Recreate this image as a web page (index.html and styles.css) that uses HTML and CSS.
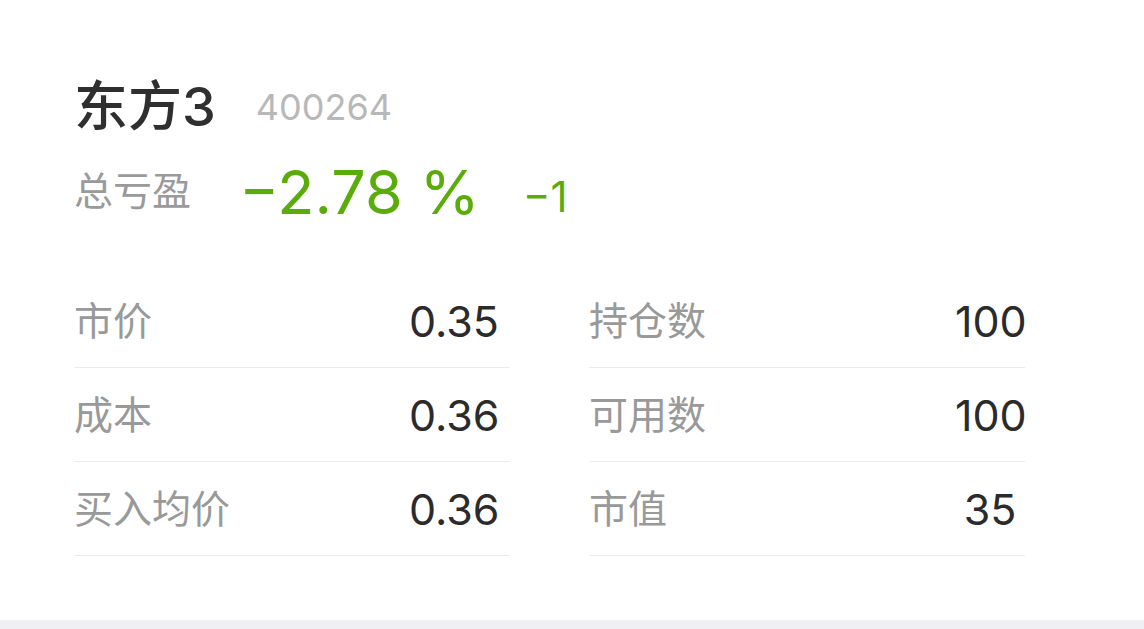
FILE: index.html
```html
<!DOCTYPE html>
<html lang="zh-CN">
<head>
<meta charset="utf-8">
<link rel="stylesheet" href="styles.css">
</head>
<body>
<div class="card">
  <div class="title-row">
    <span class="name">东方3</span>
    <span class="code">400264</span>
  </div>
  <div class="profit-row">
    <span class="profit-label">总亏盈</span>
    <span class="profit-pct">−2.78 %</span>
    <span class="profit-abs">−1</span>
  </div>
  <div class="table">
    <div class="col col-left">
      <div class="row"><span class="label">市价</span><span class="value">0.35</span></div>
      <div class="row"><span class="label">成本</span><span class="value">0.36</span></div>
      <div class="row"><span class="label">买入均价</span><span class="value">0.36</span></div>
    </div>
    <div class="col col-right">
      <div class="row"><span class="label">持仓数</span><span class="value">100</span></div>
      <div class="row"><span class="label">可用数</span><span class="value">100</span></div>
      <div class="row"><span class="label">市值</span><span class="value">35</span></div>
    </div>
  </div>
</div>
<div class="footer-band"></div>
</body>
</html>
```
FILE: styles.css
```css
html, body {
  margin: 0;
  padding: 0;
  background: #ffffff;
}
body {
  font-family: Inter, "Noto Sans CJK SC", sans-serif;
  width: 1144px;
  height: 629px;
  overflow: hidden;
}
.card {
  height: 620px;
  box-sizing: border-box;
  padding: 77px 0 0 74px;
  background: #ffffff;
}
.title-row {
  display: flex;
  align-items: center;
  height: 60px;
}
.name {
  font-size: 54px;
  line-height: 60px;
  color: #2f2f2f;
  font-weight: 500;
}
.code {
  font-size: 36px;
  line-height: 60px;
  color: #b8b8b8;
  margin-left: 40px;
}
.profit-row {
  display: flex;
  align-items: center;
  height: 70px;
  margin-top: 20px;
}
.profit-label {
  font-size: 39px;
  color: #9a9a9a;
  line-height: 70px;
  padding-bottom: 2px;
}
.profit-pct {
  font-size: 61px;
  color: #5aac0a;
  line-height: 70px;
  margin-left: 48px;
}
.profit-abs {
  font-size: 42px;
  color: #5aac0a;
  line-height: 70px;
  margin-left: 43px;
  padding-top: 10px;
}
.table {
  display: flex;
  margin-top: 47px;
}
.col {
  width: 436px;
}
.col-right {
  margin-left: 79px;
}
.row {
  display: flex;
  align-items: center;
  height: 93px;
  border-bottom: 1.5px solid #ececec;
}
.label {
  flex: 1;
  font-size: 39px;
  color: #999999;
  padding-bottom: 6px;
}
.value {
  font-size: 43px;
  color: #2b2b2b;
  text-align: center;
}
.col-left .value {
  width: 90px;
  margin-right: 11px;
}
.col-right .value {
  width: 70px;
  margin-right: 0;
}
.footer-band {
  height: 9px;
  background: #efeff4;
}
```
